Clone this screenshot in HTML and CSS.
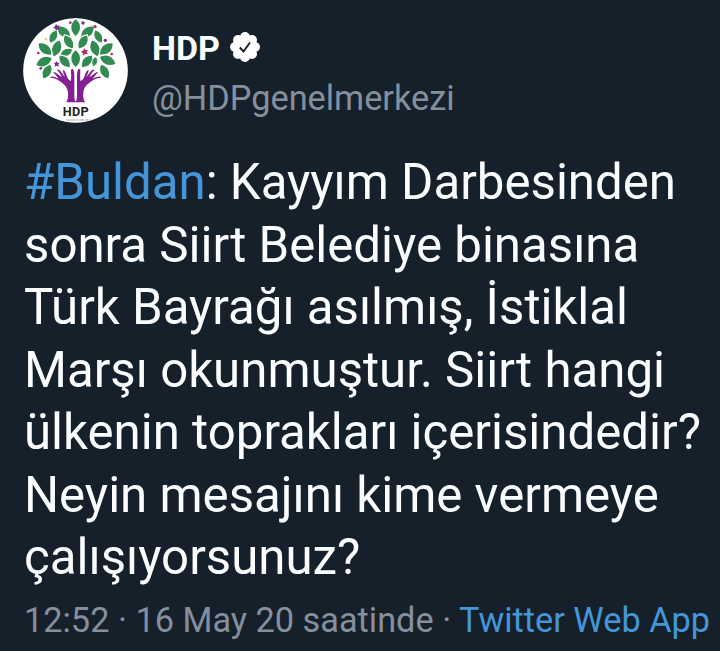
FILE: index.html
```html
<!DOCTYPE html>
<html lang="tr">
<head>
<meta charset="utf-8">
<title>HDP</title>
<link rel="stylesheet" href="styles.css">
</head>
<body>
<article class="tweet">
  <header class="author">
    <svg class="avatar" viewBox="24 24 315 315">
      <defs><path id="leaf" d="M0-28C19-13 21 10 0 28C-21 10-19-13 0-28Z"/></defs>
      <circle cx="181.500" cy="181.500" r="157" fill="#fff"/>
      <g fill="#328c51" stroke="#fff" stroke-width="4">
        <use href="#leaf" transform="translate(182 53)"/>
        <use href="#leaf" transform="translate(147 67) rotate(-48)"/>
        <use href="#leaf" transform="translate(217 67) rotate(48)"/>
        <use href="#leaf" transform="translate(115 80) rotate(28) scale(.8)"/>
        <use href="#leaf" transform="translate(250 80) rotate(-28) scale(.8)"/>
        <use href="#leaf" transform="translate(161 96) rotate(-32) scale(.9)"/>
        <use href="#leaf" transform="translate(204 96) rotate(32) scale(.9)"/>
        <use href="#leaf" transform="translate(125 115) rotate(20)"/>
        <use href="#leaf" transform="translate(240 115) rotate(-20)"/>
        <use href="#leaf" transform="translate(90 117) rotate(-48)"/>
        <use href="#leaf" transform="translate(274 117) rotate(48)"/>
        <use href="#leaf" transform="translate(154 127) rotate(65) scale(.75)"/>
        <use href="#leaf" transform="translate(87 155) rotate(65)"/>
        <use href="#leaf" transform="translate(278 151) rotate(-65)"/>
        <use href="#leaf" transform="translate(149 154) rotate(-42) scale(.9)"/>
        <use href="#leaf" transform="translate(216 154) rotate(42) scale(.9)"/>
        <use href="#leaf" transform="translate(182 146)"/>
        <use href="#leaf" transform="translate(239 155) rotate(15) scale(.55)"/>
        <use href="#leaf" transform="translate(96 185) rotate(28) scale(.9)"/>
        <use href="#leaf" transform="translate(269 185) rotate(-28) scale(.9)"/>
      </g>
      <g fill="#733083">
        <path d="M123 41l4 6 7-1-3 6 4 6-7 0-5 5-2-7-7-3 6-4Z"/>
        <path d="M124 153l3 5 7 0-4 5 2 7-7-3-6 3 1-7-4-5 6 0Z"/>
        <circle cx="204" cy="39" r="5"/><circle cx="271" cy="91" r="5"/><circle cx="77" cy="175" r="4"/>
      </g>
      <g fill="#c42765">
        <path d="M208 114l3 6 8 0-4 6 3 7-8-1-6 5-1-8-6-4 7-3Z"/>
        <circle cx="166" cy="38" r="4"/><circle cx="240" cy="50" r="5"/><circle cx="70" cy="129" r="4"/><circle cx="290" cy="132" r="4"/>
      </g>
      <circle cx="93" cy="87" r="4" fill="#e3cf67"/>
      <path id="hand" fill="#841f91" d="M173 176C179 183 178 198 178 213V257Q178 272 184 277H153Q161 268 159 249C158 231 147 222 137 215Q119 202 105 203Q108 197 121 202L131 206Q124 197 115 187Q118 184 128 193L141 202Q135 188 126 180Q129 176 138 185L150 202Q144 188 143 180Q148 179 152 189L158 205Q163 213 168 213Q169 198 168 179Z"/>
      <use href="#hand" transform="translate(364 0) scale(-1 1)"/>
      <text class="logo-name" x="182" y="318" text-anchor="middle" textLength="78">HDP</text>
      <path d="M154 330H228" stroke="#a5a5a5" stroke-width="3" stroke-dasharray="9 2 15 2"/>
    </svg>
    <div class="identity">
      <div class="name-row">
        <span class="name">HDP</span>
        <svg class="verified" viewBox="0 0 30 30">
          <g fill="#fff"><circle cx="15" cy="15" r="12"/><circle cx="15" cy="5" r="5"/><circle cx="22" cy="8" r="5"/><circle cx="25" cy="15" r="5"/><circle cx="22" cy="22" r="5"/><circle cx="15" cy="25" r="5"/><circle cx="8" cy="22" r="5"/><circle cx="5" cy="15" r="5"/><circle cx="8" cy="8" r="5"/></g>
          <path d="M9.800 15.500L13.500 19.500L20 10.500" fill="none" stroke="#17202c" stroke-width="1.900"/>
        </svg>
      </div>
      <div class="handle">@HDPgenelmerkezi</div>
    </div>
  </header>
  <p class="message">
    <span class="line"><a class="link">#Buldan</a>: Kayyım Darbesinden</span>
    <span class="line">sonra Siirt Belediye binasına</span>
    <span class="line">Türk Bayrağı asılmış, İstiklal</span>
    <span class="line">Marşı okunmuştur. Siirt hangi</span>
    <span class="line">ülkenin toprakları içerisindedir?</span>
    <span class="line">Neyin mesajını kime vermeye</span>
    <span class="line">çalışıyorsunuz?</span>
  </p>
  <footer class="meta">12:52 · 16 May 20 saatinde · <a class="link">Twitter Web App</a></footer>
</article>
</body>
</html>
```
FILE: styles.css
```css
* { box-sizing: border-box; }
body {
  margin: 0;
  background: #16202b;
  color: #fafcfe;
  font-family: Roboto, "Liberation Sans", sans-serif;
  overflow: hidden;
}
.tweet { height: 651px; padding: 18px 0 0 23px; }
.author { display: flex; height: 133px; }
.avatar { width: 105px; height: 105px; flex: none; }
.logo-name { font: 700 38px Roboto, sans-serif; fill: #222; }
.identity { padding-left: 24px; padding-top: 8px; }
.name-row { display: flex; align-items: center; height: 44px; }
.name { font-size: 34px; font-weight: 700; line-height: 44px; }
.verified { width: 30px; height: 30px; margin-left: 10px; margin-top: -3px; }
.handle { font-size: 34.300px; line-height: 40px; margin-top: 8px; color: #84909d; }
.message { margin: 0; padding-left: 1px; font-size: 49.200px; line-height: 62.500px; }
.line { display: block; white-space: nowrap; }
.link { color: #4496d8; }
.meta { margin-top: 11px; padding-left: 1px; font-size: 34.300px; line-height: 40px; color: #84909d; white-space: nowrap; }
```
